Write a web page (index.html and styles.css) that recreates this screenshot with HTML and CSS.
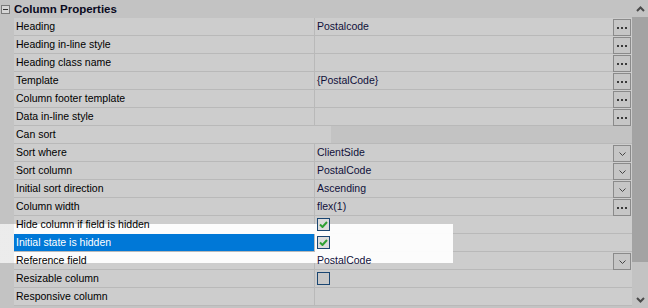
FILE: index.html
```html
<!DOCTYPE html>
<html lang="en">
<head>
    <meta charset="UTF-8">
    <title>Column Properties</title>
    <link rel="stylesheet" href="styles.css">
</head>
<body>

<div class="panel">
    <div class="grid">
        <div class="head">
            <span class="toggle"><svg width="7" height="7" viewBox="0 0 7 7"><rect x="1" y="3" width="5" height="1" fill="#333"/></svg></span>
            <span class="head-title">Column Properties</span>
        </div>

        <div class="row"><div class="gut"></div><div class="lbl"><span class="t">Heading</span></div><div class="val"><span class="t">Postalcode</span></div><div class="end"><span class="btn"><svg class="dots" width="10" height="2"><rect x="0" y="0" width="2" height="2"/><rect x="4" y="0" width="2" height="2"/><rect x="8" y="0" width="2" height="2"/></svg></span></div></div>
        <div class="row"><div class="gut"></div><div class="lbl"><span class="t">Heading in-line style</span></div><div class="val"></div><div class="end"><span class="btn"><svg class="dots" width="10" height="2"><rect x="0" y="0" width="2" height="2"/><rect x="4" y="0" width="2" height="2"/><rect x="8" y="0" width="2" height="2"/></svg></span></div></div>
        <div class="row"><div class="gut"></div><div class="lbl"><span class="t">Heading class name</span></div><div class="val"></div><div class="end"><span class="btn"><svg class="dots" width="10" height="2"><rect x="0" y="0" width="2" height="2"/><rect x="4" y="0" width="2" height="2"/><rect x="8" y="0" width="2" height="2"/></svg></span></div></div>
        <div class="row"><div class="gut"></div><div class="lbl"><span class="t">Template</span></div><div class="val"><span class="t">{PostalCode}</span></div><div class="end"><span class="btn"><svg class="dots" width="10" height="2"><rect x="0" y="0" width="2" height="2"/><rect x="4" y="0" width="2" height="2"/><rect x="8" y="0" width="2" height="2"/></svg></span></div></div>
        <div class="row"><div class="gut"></div><div class="lbl"><span class="t">Column footer template</span></div><div class="val"></div><div class="end"><span class="btn"><svg class="dots" width="10" height="2"><rect x="0" y="0" width="2" height="2"/><rect x="4" y="0" width="2" height="2"/><rect x="8" y="0" width="2" height="2"/></svg></span></div></div>
        <div class="row"><div class="gut"></div><div class="lbl"><span class="t">Data in-line style</span></div><div class="val"></div><div class="end"><span class="btn"><svg class="dots" width="10" height="2"><rect x="0" y="0" width="2" height="2"/><rect x="4" y="0" width="2" height="2"/><rect x="8" y="0" width="2" height="2"/></svg></span></div></div>
        <div class="row"><div class="gut"></div><div class="lbl no-div"><span class="t">Can sort</span></div><div class="val off"><span class="stub"></span></div><div class="end off"></div></div>
        <div class="row"><div class="gut"></div><div class="lbl"><span class="t">Sort where</span></div><div class="val"><span class="t">ClientSide</span></div><div class="end"><span class="btn"><svg width="7" height="4" viewBox="0 0 7 4"><polyline points="0.5,0.5 3.5,3.5 6.5,0.5" fill="none" stroke="#444" stroke-width="1"/></svg></span></div></div>
        <div class="row"><div class="gut"></div><div class="lbl"><span class="t">Sort column</span></div><div class="val"><span class="t">PostalCode</span></div><div class="end"><span class="btn"><svg width="7" height="4" viewBox="0 0 7 4"><polyline points="0.5,0.5 3.5,3.5 6.5,0.5" fill="none" stroke="#444" stroke-width="1"/></svg></span></div></div>
        <div class="row"><div class="gut"></div><div class="lbl"><span class="t">Initial sort direction</span></div><div class="val"><span class="t">Ascending</span></div><div class="end"><span class="btn"><svg width="7" height="4" viewBox="0 0 7 4"><polyline points="0.5,0.5 3.5,3.5 6.5,0.5" fill="none" stroke="#444" stroke-width="1"/></svg></span></div></div>
        <div class="row"><div class="gut"></div><div class="lbl"><span class="t">Column width</span></div><div class="val"><span class="t">flex(1)</span></div><div class="end"><span class="btn"><svg class="dots" width="10" height="2"><rect x="0" y="0" width="2" height="2"/><rect x="4" y="0" width="2" height="2"/><rect x="8" y="0" width="2" height="2"/></svg></span></div></div>
        <div class="row"><div class="gut"></div><div class="lbl"><span class="t">Hide column if field is hidden</span></div><div class="val"><span class="check on"><svg width="9" height="7" viewBox="0 0 9 7"><polyline points="1,3.5 3.5,6 8,1" fill="none" stroke="#2fa033" stroke-width="2"/></svg></span></div><div class="end empty"></div></div>
        <div class="row"><div class="gut"></div><div class="lbl sel"><span class="t">Initial state is hidden</span></div><div class="val"><span class="check on"><svg width="9" height="7" viewBox="0 0 9 7"><polyline points="1,3.5 3.5,6 8,1" fill="none" stroke="#2fa033" stroke-width="2"/></svg></span></div><div class="end empty"></div></div>
        <div class="row"><div class="gut"></div><div class="lbl"><span class="t">Reference field</span></div><div class="val"><span class="t">PostalCode</span></div><div class="end"><span class="btn"><svg width="7" height="4" viewBox="0 0 7 4"><polyline points="0.5,0.5 3.5,3.5 6.5,0.5" fill="none" stroke="#444" stroke-width="1"/></svg></span></div></div>
        <div class="row"><div class="gut"></div><div class="lbl"><span class="t">Resizable column</span></div><div class="val"><span class="check"></span></div><div class="end empty"></div></div>
        <div class="row"><div class="gut"></div><div class="lbl"><span class="t">Responsive column</span></div><div class="val"></div><div class="end empty"></div></div>
    </div>

    <div class="scrollbar">
        <div class="arrow"><svg width="9" height="6" viewBox="0 0 9 6"><polyline points="1,5 4.5,1.5 8,5" fill="none" stroke="#4a4a4a" stroke-width="2"/></svg></div>
        <div class="thumb"></div>
        <div class="track"></div>
        <div class="arrow"><svg width="9" height="6" viewBox="0 0 9 6"><polyline points="1,1 4.5,4.5 8,1" fill="none" stroke="#4a4a4a" stroke-width="2"/></svg></div>
    </div>

    <!-- highlight box laid over the rows -->
    <div class="highlight"></div>
</div>

</body>
</html>
```

FILE: styles.css
```css
* {
    box-sizing: border-box;
}

body {
    margin: 0;
    font-family: "Liberation Sans", Arial, sans-serif;
    font-size: 10.5px;
    color: #000;
    background: #c3c3c3;
}

.panel {
    position: relative;
    width: 648px;
    height: 308px;
    display: flex;
    overflow: hidden;
    background: #c3c3c3;
}

.grid {
    width: 632px;
}

.head {
    height: 18px;
    display: flex;
    align-items: center;
    background: #c3c3c3;
}

.toggle {
    width: 9px;
    height: 9px;
    margin: 0 4px 0 1px;
    border: 1px solid #7a7a7a;
    background: #d6d6d6;
    display: flex;
}

.head-title {
    font-weight: bold;
    font-size: 11.5px;
    color: #0a0a1e;
}

.row {
    display: grid;
    grid-template-columns: 14px 301px 1fr 19px;
    height: 18px;
}

.gut {
    background: #c3c3c3;
}

.lbl, .val, .end {
    background: #cdcdcd;
    border-bottom: 1px solid #b9b9b9;
    line-height: 17px;
    white-space: nowrap;
}

.lbl {
    padding-left: 2px;
    border-right: 1px solid #b9b9b9;
}

.lbl.no-div {
    border-right: none;
}

.lbl.sel {
    position: relative;
    z-index: 2;
    background: #0078d7;
    color: #fff;
}

.val {
    padding-left: 2px;
    color: #10103a;
    display: flex;
    align-items: flex-start;
}

.val.off, .end.off {
    background: #c3c3c3;
    padding-left: 0;
}

.stub {
    width: 16px;
    height: 17px;
    background: #cdcdcd;
}

.end {
    border-bottom: none;
    padding-top: 1px;
}

.end.empty, .end.off {
    border-bottom: 1px solid #b9b9b9;
}

.t {
    position: relative;
    z-index: 2;
}

.btn {
    width: 18px;
    height: 17px;
    border: 1px solid #8a8a8a;
    background: #c6c6c6;
    display: flex;
    align-items: center;
    justify-content: center;
}

.dots rect {
    fill: #3a3a3a;
}

.check {
    position: relative;
    z-index: 2;
    width: 13px;
    height: 13px;
    margin-top: 2px;
    border: 1px solid #1a4672;
    background: #c8c8c8;
    display: flex;
    align-items: center;
    justify-content: center;
}

.check.on {
    background: #dcdcdc;
}

/* Scrollbar */
.scrollbar {
    width: 16px;
    display: flex;
    flex-direction: column;
    background: #c3c3c3;
}

.arrow {
    height: 17px;
    display: flex;
    align-items: center;
    justify-content: center;
}

.thumb {
    height: 245px;
    background: #a3a3a3;
}

.track {
    flex: 1;
}

.highlight {
    position: absolute;
    left: 0;
    top: 224px;
    width: 453px;
    height: 39px;
    z-index: 1;
    background: linear-gradient(to right, rgba(238, 238, 238, 0.95) 14px, rgba(255, 255, 255, 0.95) 14px);
}
```
